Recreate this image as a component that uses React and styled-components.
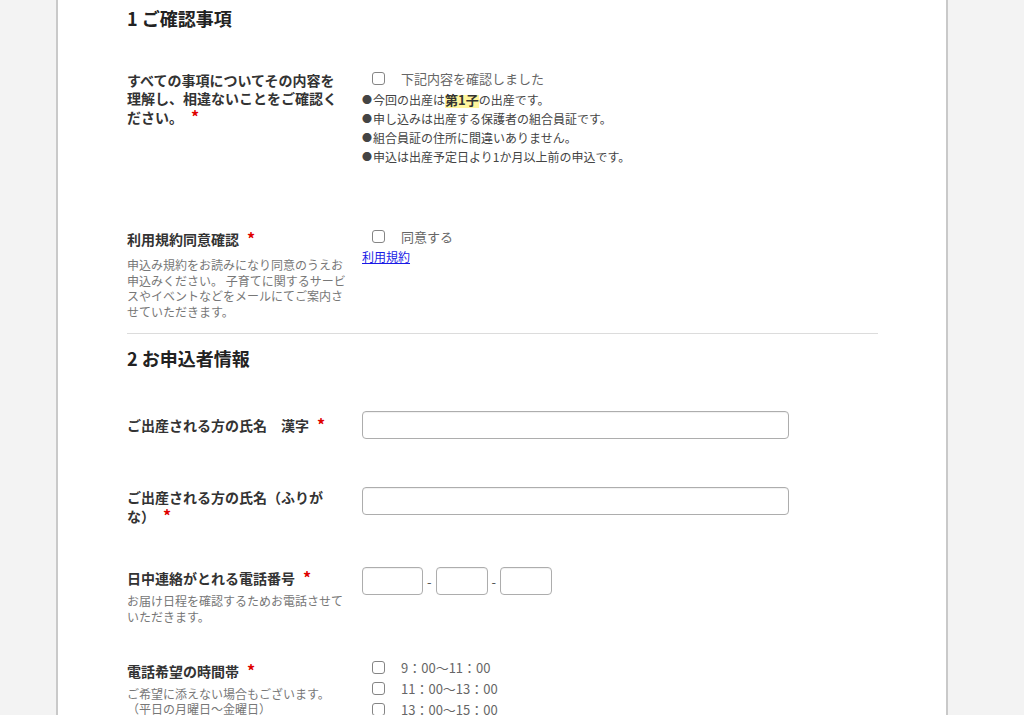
import React from "react";
import styled, { createGlobalStyle } from "styled-components";

const Global = createGlobalStyle`
  html, body { margin: 0; padding: 0; background: #f3f3f3; }
  body {
    font-family: "Noto Sans CJK JP", "Noto Sans", sans-serif;
    color: #333;
    text-spacing-trim: space-all;
  }
  * { box-sizing: border-box; }
`;

const Panel = styled.div`
  margin-left: 56px;
  width: 892px;
  min-height: 100vh;
  background: #fff;
  border-left: 2px solid #c9c9c9;
  border-right: 2px solid #c9c9c9;
  padding: 6px 68px 40px 69px;
`;

const Section = styled.section`
  padding-bottom: ${(p) => p.$pb || 0}px;
  border-bottom: ${(p) => (p.$divider ? "1px solid #dcdcdc" : "none")};
  margin-top: ${(p) => p.$mt || 0}px;
`;

const Heading = styled.h2`
  margin: 0;
  font-size: 18px;
  line-height: 24px;
  font-weight: bold;
  color: #222;
`;

const Row = styled.div`
  display: grid;
  grid-template-columns: 220px 1fr;
  column-gap: 15px;
  margin-top: ${(p) => p.$mt}px;
`;

const LabelCol = styled.div`
  padding-top: ${(p) => p.$pt ?? 3}px;
`;

const Label = styled.div`
  font-size: 14px;
  line-height: 18px;
  font-weight: bold;
  color: #333;
`;

const Req = styled.span`
  color: #e00000;
  font-size: 16px;
  line-height: 18px;
  font-weight: bold;
  margin-left: 8px;
`;

const Desc = styled.div`
  margin-top: ${(p) => p.$mt || 7}px;
  font-size: 12px;
  line-height: 15.6px;
  color: #777;
`;

const FieldCol = styled.div`
  display: flex;
  flex-direction: column;
  align-items: flex-start;
`;

const Option = styled.label`
  display: flex;
  align-items: center;
  height: ${(p) => p.$h || 20}px;
  font-size: 13px;
  color: #666;
`;

const Check = styled.input.attrs({ type: "checkbox" })`
  appearance: none;
  width: 13px;
  height: 13px;
  margin: 0 16px 0 10px;
  border: 1px solid #858585;
  border-radius: 3px;
  background: #fff;
`;

const Bullets = styled.ul`
  list-style: none;
  margin: 2px 0 0;
  padding: 0;
  font-size: 12px;
  color: #444;
`;

const Bullet = styled.li`
  display: flex;
  align-items: center;
  height: 19px;
  white-space: nowrap;
  &::before {
    content: "●";
    width: 11px;
    font-size: 10px;
    color: #444;
  }
`;

const Marker = styled.strong`
  font-size: 13px;
  line-height: 17px;
  color: #333;
  background: linear-gradient(transparent 25%, #fff59d 25%);
`;

const Link = styled.a`
  margin-top: 2px;
  font-size: 12px;
  line-height: 18px;
  color: #1a1ae6;
  text-decoration: underline;
`;

const TextInput = styled.input.attrs({ type: "text" })`
  width: ${(p) => p.$w}px;
  height: ${(p) => p.$h || 28}px;
  border: 1px solid #adadad;
  border-radius: 4px;
  background: #fff;
  box-shadow: inset 0 1px 1px rgba(0, 0, 0, 0.06);
  padding: 0 6px;
  font-size: 13px;
  outline: none;
`;

const TelRow = styled.div`
  display: flex;
  align-items: center;
`;

const Dash = styled.span`
  margin: 0 4px;
  font-size: 13px;
  color: #555;
`;

export default function App() {
  return (
    <>
      <Global />
      <Panel>
        <Section $divider $pb={14}>
          <Heading>1 ご確認事項</Heading>

          <Row $mt={38}>
            <LabelCol>
              <Label>
                すべての事項についてその内容を理解し、相違ないことをご確認ください。
                <Req>*</Req>
              </Label>
            </LabelCol>
            <FieldCol>
              <Option>
                <Check />
                下記内容を確認しました
              </Option>
              <Bullets>
                <Bullet>
                  今回の出産は<Marker>第1子</Marker>の出産です。
                </Bullet>
                <Bullet>申し込みは出産する保護者の組合員証です。</Bullet>
                <Bullet>組合員証の住所に間違いありません。</Bullet>
                <Bullet>申込は出産予定日より1か月以上前の申込です。</Bullet>
              </Bullets>
            </FieldCol>
          </Row>

          <Row $mt={60}>
            <LabelCol>
              <Label>
                利用規約同意確認<Req>*</Req>
              </Label>
              <Desc $mt={9}>
                申込み規約をお読みになり同意のうえお申込みください。
                子育てに関するサービスやイベントなどをメールにてご案内させていただきます。
              </Desc>
            </LabelCol>
            <FieldCol>
              <Option>
                <Check />
                同意する
              </Option>
              <Link href="#">利用規約</Link>
            </FieldCol>
          </Row>
        </Section>

        <Section $mt={12}>
          <Heading>2 お申込者情報</Heading>

          <Row $mt={41}>
            <LabelCol $pt={4}>
              <Label>
                ご出産される方の氏名　漢字<Req>*</Req>
              </Label>
            </LabelCol>
            <FieldCol>
              <TextInput $w={427} />
            </FieldCol>
          </Row>

          <Row $mt={48}>
            <LabelCol $pt={1}>
              <Label>
                ご出産される方の氏名（ふりがな）<Req>*</Req>
              </Label>
            </LabelCol>
            <FieldCol>
              <TextInput $w={427} />
            </FieldCol>
          </Row>

          <Row $mt={42}>
            <LabelCol $pt={1}>
              <Label>
                日中連絡がとれる電話番号<Req>*</Req>
              </Label>
              <Desc $mt={6}>お届け日程を確認するためお電話させていただきます。</Desc>
            </LabelCol>
            <FieldCol>
              <TelRow>
                <TextInput $w={61} />
                <Dash>-</Dash>
                <TextInput $w={52} />
                <Dash>-</Dash>
                <TextInput $w={52} />
              </TelRow>
            </FieldCol>
          </Row>

          <Row $mt={32}>
            <LabelCol $pt={4}>
              <Label>
                電話希望の時間帯<Req>*</Req>
              </Label>
              <Desc $mt={6}>ご希望に添えない場合もございます。（平日の月曜日～金曜日）</Desc>
            </LabelCol>
            <FieldCol>
              <Option $h={21}>
                <Check />
                9：00～11：00
              </Option>
              <Option $h={21}>
                <Check />
                11：00～13：00
              </Option>
              <Option $h={21}>
                <Check />
                13：00～15：00
              </Option>
              <Option $h={21}>
                <Check />
                15：00～17：00
              </Option>
            </FieldCol>
          </Row>
        </Section>
      </Panel>
    </>
  );
}
